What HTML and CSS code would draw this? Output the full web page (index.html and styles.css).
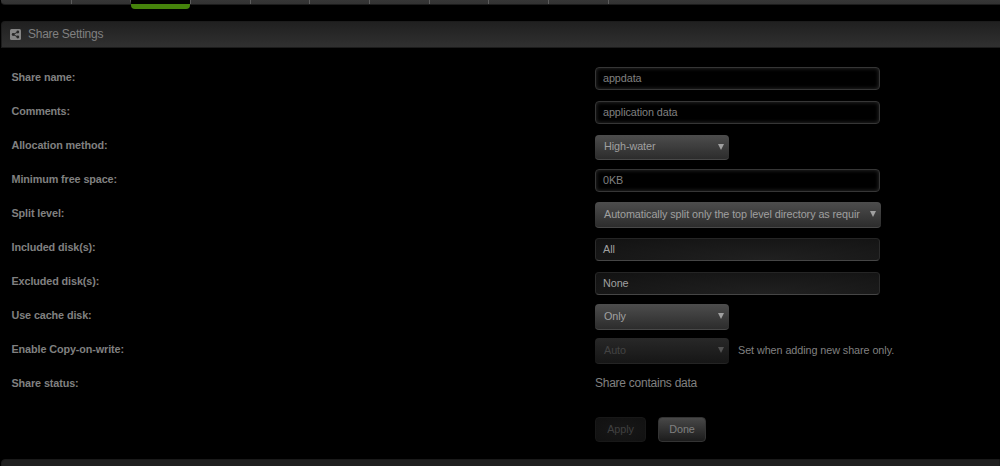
FILE: index.html
```html
<!DOCTYPE html>
<html lang="en">
<head>
    <meta charset="UTF-8">
    <title>Share Settings</title>
    <link rel="stylesheet" href="styles.css">
</head>
<body>
    <nav class="menu">
        <span class="tab first"></span>
        <span class="tab"></span>
        <span class="tab active"></span>
        <span class="tab"></span>
        <span class="tab"></span>
        <span class="tab"></span>
        <span class="tab"></span>
        <span class="tab"></span>
        <span class="tab"></span>
        <span class="tab"></span>
        <span class="tab"></span>
    </nav>
    <div class="title">
        <svg class="icon" viewBox="0 0 11 11">
            <rect width="11" height="11" rx="1.5" fill="#858585"/>
            <path d="M7.8 3 3.2 5.5 7.8 8" fill="none" stroke="#262626" stroke-width="1"/>
            <circle cx="7.8" cy="3" r="1.4" fill="#262626"/>
            <circle cx="3.2" cy="5.5" r="1.4" fill="#262626"/>
            <circle cx="7.8" cy="8" r="1.4" fill="#262626"/>
        </svg>
        <span>Share Settings</span>
    </div>
    <form class="settings">
        <div class="row">
            <label>Share name:</label>
            <div class="field input">appdata</div>
        </div>
        <div class="row">
            <label>Comments:</label>
            <div class="field input">application data</div>
        </div>
        <div class="row">
            <label>Allocation method:</label>
            <div class="select"><span>High-water</span><i class="arrow"></i></div>
        </div>
        <div class="row">
            <label>Minimum free space:</label>
            <div class="field input">0KB</div>
        </div>
        <div class="row">
            <label>Split level:</label>
            <div class="select wide"><span>Automatically split only the top level directory as requir</span><i class="arrow"></i></div>
        </div>
        <div class="row">
            <label>Included disk(s):</label>
            <div class="field disks">All</div>
        </div>
        <div class="row">
            <label>Excluded disk(s):</label>
            <div class="field disks">None</div>
        </div>
        <div class="row">
            <label>Use cache disk:</label>
            <div class="select low"><span>Only</span><i class="arrow"></i></div>
        </div>
        <div class="row">
            <label>Enable Copy-on-write:</label>
            <div class="select low disabled"><span>Auto</span><i class="arrow"></i></div>
            <span class="note">Set when adding new share only.</span>
        </div>
        <div class="row">
            <label>Share status:</label>
            <span class="status">Share contains data</span>
        </div>
        <div class="buttons">
            <button type="button" class="apply" disabled>Apply</button>
            <button type="button" class="done">Done</button>
        </div>
    </form>
    <div class="next-title"></div>
</body>
</html>
```

FILE: styles.css
```css
* {
    box-sizing: border-box;
}
body {
    margin: 0;
    height: 466px;
    overflow: hidden;
    background: #000;
    color: #808080;
    font-family: "Liberation Sans", Arial, sans-serif;
    font-size: 10.8px;
    letter-spacing: -0.07px;
}
.menu {
    display: flex;
    height: 5px;
    margin-left: 1px;
    background: linear-gradient(#363636, #323232);
    border-bottom: 1px solid #1c1c1c;
    border-bottom-left-radius: 4px;
}
.tab {
    flex: none;
    width: 59.7px;
    height: 4px;
    border-left: 1px solid #5c5c5c;
}
.tab.first {
    width: 69.5px;
    border-left: none;
}
.tab.active {
    height: 9px;
    margin-left: 1px;
    width: 58.7px;
    border-left: none;
    background: linear-gradient(#000 4px, #45830b 4px);
    border-radius: 0 0 4px 4px;
    box-shadow: -1px -5px 0 #5c5c5c;
}
.title {
    display: flex;
    align-items: center;
    height: 27px;
    margin: 16px 0 0 1px;
    padding: 0 0 1px 8px;
    font-size: 12px;
    letter-spacing: -0.25px;
    background: linear-gradient(#202020, #303030);
    border: 1px solid #1c1c1c;
    border-right: none;
    border-top-left-radius: 4px;
}
.icon {
    width: 11px;
    height: 11px;
    margin-right: 7px;
}
.settings {
    padding-top: 13px;
}
.row {
    display: flex;
    align-items: flex-start;
    height: 34px;
    padding-left: 11.5px;
}
.row label {
    width: 583.5px;
    line-height: 14px;
    margin-top: 9px;
    font-weight: bold;
    letter-spacing: -0.1px;
}
.field {
    width: 285px;
    height: 23px;
    margin-top: 6px;
    padding-left: 7px;
    line-height: 21px;
    border: 1px solid #363636;
    border-radius: 4px;
}
.input {
    box-shadow: inset 0 0 4px #303030;
}
.disks {
    margin-top: 7px;
    color: #a0a0a0;
    background: radial-gradient(ellipse at 60% 100%, #202020, #121212);
    border-color: #252525 #2b2b2b #464646;
}
.select {
    display: flex;
    justify-content: space-between;
    width: 134px;
    height: 25px;
    margin-top: 6px;
    padding: 0 5px 0 9px;
    line-height: 23px;
    color: #a0a0a0;
    background: linear-gradient(#4d4d4d, #2c2c2c);
    border-bottom: 1px solid #484848;
    border-radius: 4px;
    white-space: nowrap;
}
.select.wide {
    width: 286px;
}
.select.wide,
.select.low {
    margin-top: 5px;
    height: 26px;
    line-height: 25px;
}
.arrow {
    align-self: center;
    margin-bottom: 1px;
    border: 3px solid transparent;
    border-top: 6px solid #a0a0a0;
    border-bottom: none;
}
.select.disabled {
    color: #434343;
    background: linear-gradient(#282828, #161616);
    border-bottom-color: #242424;
}
.disabled .arrow {
    border-top-color: #525252;
}
.note {
    margin: 10px 0 0 9px;
    line-height: 14px;
}
.status {
    margin-top: 9px;
    line-height: 14px;
    font-size: 12px;
    letter-spacing: -0.25px;
}
.buttons {
    display: flex;
    gap: 12px;
    padding: 16px 0 0 595px;
}
button {
    height: 25px;
    padding: 0 0 1px;
    font: inherit;
    letter-spacing: inherit;
    border-radius: 4px;
}
.apply {
    width: 51px;
    color: #404040;
    background: radial-gradient(#171717, #111);
    border: 1px solid #181818;
}
.done {
    width: 48px;
    color: #808080;
    background: linear-gradient(#484848, #1c1c1c);
    border: 1px solid #343434;
}
.next-title {
    height: 20px;
    margin: 17px 0 0 1px;
    background: #202020;
    border: 1px solid #1a1a1a;
    border-top-left-radius: 4px;
}
```
